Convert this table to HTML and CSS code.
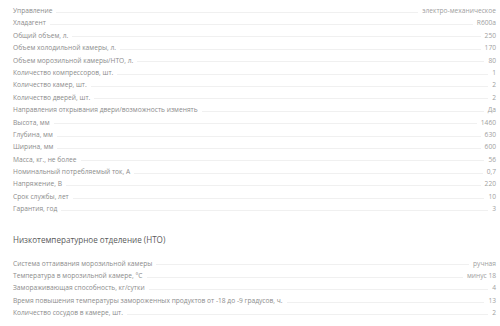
FILE: index.html
```html
<!DOCTYPE html>
<html lang="ru">
<head>
<meta charset="utf-8">
<title>Характеристики</title>
<link rel="stylesheet" href="styles.css">
</head>
<body>
<div class="page">
  <div class="specs">
    <div class="row"><span class="label">Управление</span><span class="dots"></span><span class="value">электро-механическое</span></div>
    <div class="row"><span class="label">Хладагент</span><span class="dots"></span><span class="value">R600a</span></div>
    <div class="row"><span class="label">Общий объем, л.</span><span class="dots"></span><span class="value">250</span></div>
    <div class="row"><span class="label">Объем холодильной камеры, л.</span><span class="dots"></span><span class="value">170</span></div>
    <div class="row"><span class="label">Объем морозильной камеры/НТО, л.</span><span class="dots"></span><span class="value">80</span></div>
    <div class="row"><span class="label">Количество компрессоров, шт.</span><span class="dots"></span><span class="value">1</span></div>
    <div class="row"><span class="label">Количество камер, шт.</span><span class="dots"></span><span class="value">2</span></div>
    <div class="row"><span class="label">Количество дверей, шт.</span><span class="dots"></span><span class="value">2</span></div>
    <div class="row"><span class="label">Направления открывания двери/возможность изменять</span><span class="dots"></span><span class="value">Да</span></div>
    <div class="row"><span class="label">Высота, мм</span><span class="dots"></span><span class="value">1460</span></div>
    <div class="row"><span class="label">Глубина, мм</span><span class="dots"></span><span class="value">630</span></div>
    <div class="row"><span class="label">Ширина, мм</span><span class="dots"></span><span class="value">600</span></div>
    <div class="row"><span class="label">Масса, кг., не более</span><span class="dots"></span><span class="value">56</span></div>
    <div class="row"><span class="label">Номинальный потребляемый ток, А</span><span class="dots"></span><span class="value">0,7</span></div>
    <div class="row"><span class="label">Напряжение, В</span><span class="dots"></span><span class="value">220</span></div>
    <div class="row"><span class="label">Срок службы, лет</span><span class="dots"></span><span class="value">10</span></div>
    <div class="row"><span class="label">Гарантия, год</span><span class="dots"></span><span class="value">3</span></div>
  </div>
  <h2 class="section-title">Низкотемпературное отделение (НТО)</h2>
  <div class="specs">
    <div class="row"><span class="label">Система оттаивания морозильной камеры</span><span class="dots"></span><span class="value">ручная</span></div>
    <div class="row"><span class="label">Температура в морозильной камере, °С</span><span class="dots"></span><span class="value">минус 18</span></div>
    <div class="row"><span class="label">Замораживающая способность, кг/сутки</span><span class="dots"></span><span class="value">4</span></div>
    <div class="row"><span class="label">Время повышения температуры замороженных продуктов от -18 до -9 градусов, ч.</span><span class="dots"></span><span class="value">13</span></div>
    <div class="row"><span class="label">Количество сосудов в камере, шт.</span><span class="dots"></span><span class="value">2</span></div>
  </div>
</div>
</body>
</html>
```

FILE: styles.css
```css
html, body {
  margin: 0;
  padding: 0;
  background: #ffffff;
}

.page {
  padding: 5px 4px 0 13px;
  font-family: "Open Sans", "Liberation Sans", sans-serif;
}

.specs {
  display: flex;
  flex-direction: column;
}

.row {
  display: flex;
  align-items: center;
  height: 12.4px;
  font-size: 6.65px;
  line-height: 12.4px;
  white-space: nowrap;
}

.label {
  color: #8c8c8c;
}

.dots {
  flex: 1;
  height: 0;
  margin: 2px 4px 0;
  border-bottom: 1px solid #f0f0f0;
}

.value {
  color: #a0a0a0;
}

.section-title {
  margin: 18px 0 12px;
  font-size: 8.1px;
  line-height: 12px;
  font-weight: 400;
  color: #5a5a5a;
}
```
